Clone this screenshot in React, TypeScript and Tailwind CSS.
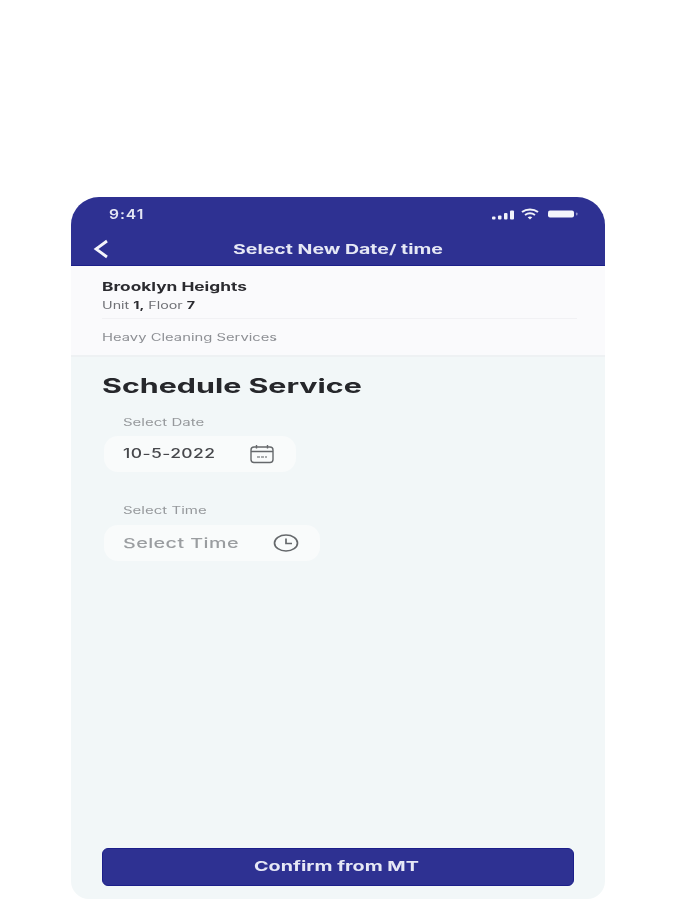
import React from "react";

export default function App() {
  return (
    <div className="w-[675px] h-[900px] bg-white overflow-hidden pt-[197px] pl-[71px] font-['Inter','Liberation_Sans',sans-serif]">
      <div className="w-[534px] h-[702px] flex flex-col rounded-t-[28px] rounded-b-[18px] overflow-hidden bg-[#f2f7f8] blur-[0.5px]">
        {/* Header */}
        <div className="h-[69px] bg-[#2e3192] border-b border-[#1c1f8a] shrink-0 flex flex-col text-white">
          <div className="h-[27px] flex items-end justify-between pl-[38px] pr-[27px]">
            <span className="text-[13px] leading-[20px] font-semibold text-[#e4e6f4] tracking-[0.8px] inline-block origin-left scale-x-[1.2]">9:41</span>
            <div className="flex items-center gap-[5px] h-[20px]">
              <svg width="23" height="10" viewBox="0 0 23 10" fill="#f2f3fa" className="mt-[1px]">
                <rect x="0" y="6.5" width="3.5" height="3" rx="1" />
                <rect x="6" y="5.5" width="3.5" height="4" rx="1" />
                <rect x="12" y="3" width="3.5" height="6.5" rx="1" />
                <rect x="18" y="0.5" width="4" height="9" rx="1" />
              </svg>
              <svg width="20" height="12" viewBox="0 0 18 12" fill="none" stroke="#f2f3fa" strokeWidth="2">
                <path d="M1 4 C5.5 0.5 12.5 0.5 17 4" />
                <path d="M4 7 C7 5 11 5 14 7" />
                <path d="M9 11.5 L6.7 9.2 C8 8.3 10 8.3 11.3 9.2 Z" fill="#f2f3fa" stroke="none" />
              </svg>
              <svg width="30" height="8" viewBox="0 0 30 8" className="ml-[3px]">
                <rect x="0" y="0.5" width="26" height="7" rx="2" fill="#f4f5fb" />
                <rect x="28" y="2.5" width="1.5" height="3" rx="0.7" fill="#8f91c8" />
              </svg>
            </div>
          </div>
          <div className="relative flex-1 flex items-center justify-center pt-[8px]">
            <svg width="16" height="20" viewBox="0 0 16 20" fill="none" stroke="#f4f5fb" strokeWidth="2.8" className="absolute left-[22px] top-[15px]">
              <path d="M14 2 L3 10 L14 18" />
            </svg>
            <span className="text-[13px] leading-[20px] font-bold text-[#e6e8f5] inline-block scale-x-[1.5]">Select New Date/ time</span>
          </div>
        </div>

        {/* Property info */}
        <div className="h-[91px] bg-[#fafafc] shrink-0 border-b-2 border-[#eef1f3] px-[31px] pt-[12px]">
          <div className="text-[12px] leading-[17px] font-bold text-[#2b2b30] origin-left scale-x-[1.44]">Brooklyn Heights</div>
          <div className="text-[10px] leading-[14px] mt-[3px] text-[#6f7075] origin-left scale-x-[1.43]">
            Unit <span className="font-bold text-[#2b2b30]">1,</span> Floor <span className="font-bold text-[#2b2b30]">7</span>
          </div>
          <div className="h-px bg-[#f1f1f4] mt-[6px] mr-[-3px]"></div>
          <div className="text-[10px] leading-[14px] mt-[11px] text-[#8d8f94] origin-left scale-x-[1.48]">Heavy Cleaning Services</div>
        </div>

        {/* Content */}
        <div className="flex-1 flex flex-col px-[31px] min-h-0">
          <div className="mt-[15px] text-[20px] leading-[28px] font-bold text-[#26272b] origin-left scale-x-[1.52]">Schedule Service</div>

          <div className="mt-[15px] ml-[21px] text-[10px] leading-[14px] text-[#96999c] origin-left scale-x-[1.5]">Select Date</div>
          <div className="mt-[7px] ml-[2px] w-[192px] h-[36px] rounded-[14px] bg-[#f9fbfb] flex items-center pl-[19px]">
            <span className="w-[127px] text-[12.5px] leading-[18px] tracking-[0.3px] font-medium text-[#47484c] origin-left scale-x-[1.4]">10-5-2022</span>
            <svg width="24" height="20" viewBox="0 0 24 20" fill="none" stroke="#65686b" strokeWidth="1.4">
              <rect x="1" y="3" width="22" height="15.5" rx="3" />
              <path d="M1 7.5 H23 M6.5 1 V4.5 M17.5 1 V4.5" />
              <path d="M7 13 H17" strokeWidth="1.6" strokeDasharray="3 1" stroke="#8f9295" />
            </svg>
          </div>

          <div className="mt-[31px] ml-[21px] text-[10px] leading-[14px] text-[#96999c] origin-left scale-x-[1.5]">Select Time</div>
          <div className="mt-[8px] ml-[2px] w-[216px] h-[36px] rounded-[14px] bg-[#f9fbfb] flex items-center pl-[19px]">
            <span className="w-[150px] text-[13.5px] leading-[18px] text-[#9a9da0] tracking-[0.3px] font-medium origin-left scale-x-[1.46]">Select Time</span>
            <svg width="26" height="18" viewBox="0 0 26 18" fill="none" stroke="#65686b" strokeWidth="1.7">
              <ellipse cx="13" cy="9" rx="11.5" ry="8" />
              <path d="M13 4.5 V9.5 H19" />
            </svg>
          </div>

          <button className="mt-auto mb-[13px] h-[38px] w-full shrink-0 rounded-[6px] bg-[#2e3192] border border-[#1c1f8a] text-[#e6e8f5]">
            <span className="inline-block text-[13.5px] leading-[20px] font-bold scale-x-[1.46] -translate-y-[2px] ml-[-3px]">Confirm from MT</span>
          </button>
        </div>
      </div>
    </div>
  );
}
